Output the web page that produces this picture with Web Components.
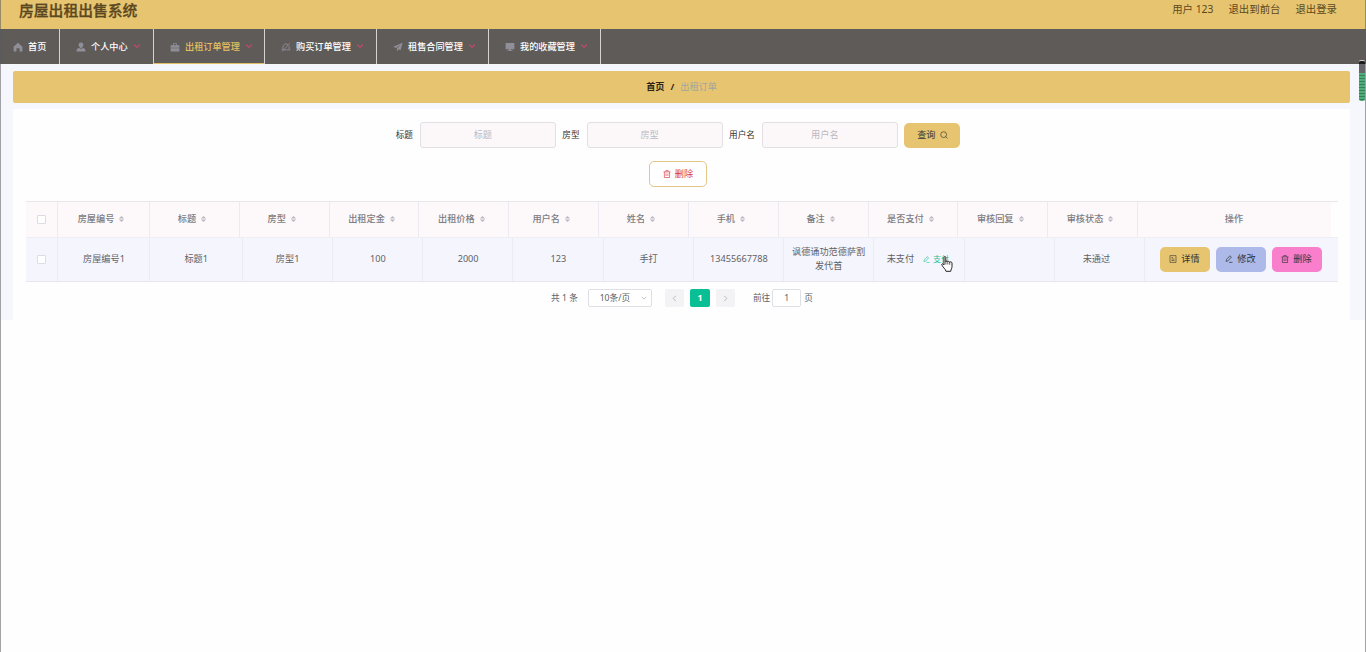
<!DOCTYPE html>
<html lang="zh-CN">
<head>
<meta charset="UTF-8">
<title>房屋出租出售系统</title>
<style>
  html, body {
    margin: 0;
    padding: 0;
  }
  body {
    width: 1366px;
    height: 652px;
    overflow: hidden;
    background: #fefefe;
    font-family: "Noto Sans", "Noto Sans CJK SC", sans-serif;
    font-size: 9.17px;
    line-height: 14px;
    color: #606266;
  }
</style>
</head>
<body>
<rent-app></rent-app>

<script>
const ICONS = {
  home: '<path fill="currentColor" d="M8 1 1 7.500V15h4.500v-5h5v5H15V7.500Z"/>',
  user: '<path fill="currentColor" d="M8 1a3.700 3.700 0 0 0-3.700 3.900C4.300 7.200 6 9.500 8 9.500s3.700-2.300 3.700-4.600A3.700 3.700 0 0 0 8 1ZM5 9.700c-2.300.6-4 1.600-4 3V15h14v-2.300c0-1.400-1.700-2.400-4-3a5 5 0 0 1-6 0Z"/>',
  box: '<path fill="currentColor" d="M5 2h6v3h4v4H1V5h4Zm1.300 1.300V5h3.400V3.300ZM1 10h14v5H1Z"/>',
  bell: '<path fill="none" stroke="currentColor" stroke-width="1.400" d="M3 12V8a5 5 0 0 1 8.500-3.500M13 6v6M1 12.500h14M2 15 14 2"/>',
  send: '<path fill="currentColor" d="M15.500 1 .5 7.500l4.200 2L12 4.500 6.200 10.200V15l2.500-3.300 3.300 1.600Z"/>',
  screen: '<path fill="currentColor" d="M1 1.500h14v10H9.500V13H12v1.500H4V13h2.500v-1.500H1Z"/>',
  down: '<path fill="none" stroke="currentColor" stroke-width="2.400" d="m2 5 6 6 6-6"/>',
  left: '<path fill="none" stroke="currentColor" stroke-width="2.200" d="M11 2 5 8l6 6"/>',
  right: '<path fill="none" stroke="currentColor" stroke-width="2.200" d="m5 2 6 6-6 6"/>',
  search: '<path fill="none" stroke="currentColor" stroke-width="1.300" d="M7.300 1.500a5.800 5.800 0 1 0 0 11.600 5.800 5.800 0 0 0 0-11.600ZM11.500 11.500 15 15"/>',
  trash: '<path fill="none" stroke="currentColor" stroke-width="1.300" d="M1 3.800h14M5.500 3.500V1.200h5v2.300M2.800 4v11h10.400V4M6.200 7v5M9.800 7v5"/>',
  edit: '<path fill="none" stroke="currentColor" stroke-width="1.400" d="m3 9 6.800-7.500 3 2.700L6 11.800l-4 1Zm5 5.700h7"/>',
  doc: '<path fill="none" stroke="currentColor" stroke-width="1.200" d="M2 1.200h12v13.600H2ZM5 5h3M5 8h6M5 11h6"/>',
  sort: '<path fill="currentColor" d="M8 1l6 6H2ZM8 15l6-6H2Z"/>'
};

class UiIcon extends HTMLElement {
  constructor() {
    super();
    this.attachShadow({mode: 'open'});
  }
  connectedCallback() {
    this.shadowRoot.innerHTML = `
      <style>
        :host {
          display: inline-block;
          flex: none;
          width: 8px;
          height: 8px;
        }
        svg {
          display: block;
          width: 100%;
          height: 100%;
        }
      </style>
      <svg viewBox="0 0 16 16">${ICONS[this.getAttribute('name')]}</svg>
    `;
  }
}
customElements.define('ui-icon', UiIcon);

class SiteHeader extends HTMLElement {
  constructor() {
    super();
    this.attachShadow({mode: 'open'}).innerHTML = `
      <style>
        :host {
          display: flex;
          justify-content: space-between;
          height: 29px;
          box-sizing: border-box;
          padding: 0 29px 0 19px;
          background: #e7c570;
          color: #5b4821;
        }
        h1 {
          margin: 0;
          font-size: 14.800px;
          font-weight: 500;
          line-height: 20px;
          -webkit-text-stroke: .3px;
        }
        nav {
          display: flex;
          gap: 15px;
          font-size: 10.400px;
          line-height: 18px;
        }
      </style>
      <h1><slot></slot></h1>
      <nav><span>用户 123</span><span>退出到前台</span><span>退出登录</span></nav>
    `;
  }
}
customElements.define('site-header', SiteHeader);

class NavItem extends HTMLElement {
  constructor() {
    super();
    this.attachShadow({mode: 'open'});
  }
  connectedCallback() {
    const arrow = this.hasAttribute('plain') ? '' : '<ui-icon class="arrow" name="down"></ui-icon>';
    this.shadowRoot.innerHTML = `
      <style>
        :host {
          display: flex;
          align-items: center;
          box-sizing: border-box;
          width: 112px;
          padding: 0 0 0 16px;
          border-right: 1px solid #d5d3d1;
          color: #fff;
          font-weight: 500;
          white-space: nowrap;
        }
        :host([active]) {
          color: #e7bf62;
          box-shadow: inset 0 -1px #e0bc68;
        }
        .icon {
          width: 10px;
          height: 10px;
          margin: 1px 5px 0 0;
          color: #908f98;
        }
        .arrow {
          width: 8px;
          height: 8px;
          margin: -1px 0 0 5px;
          color: #c04a66;
        }
      </style>
      <ui-icon class="icon" name="${this.getAttribute('icon')}"></ui-icon>
      <slot></slot>
      ${arrow}
    `;
  }
}
customElements.define('nav-item', NavItem);

class NavBar extends HTMLElement {
  constructor() {
    super();
    this.attachShadow({mode: 'open'}).innerHTML = `
      <style>
        :host {
          display: flex;
          height: 35px;
          background: #5e5b59;
        }
      </style>
      <slot></slot>
    `;
  }
}
customElements.define('nav-bar', NavBar);

class CrumbBar extends HTMLElement {
  constructor() {
    super();
    this.attachShadow({mode: 'open'}).innerHTML = `
      <style>
        :host {
          display: flex;
          align-items: center;
          justify-content: center;
          gap: 6px;
          height: 32px;
          border-radius: 2px;
          background: #e7c570;
          color: #2d2517;
        }
        b {
          font-weight: 700;
        }
        span {
          color: #a3a4a0;
        }
      </style>
      <b>首页</b><b>/</b><span><slot></slot></span>
    `;
  }
}
customElements.define('crumb-bar', CrumbBar);

class SearchField extends HTMLElement {
  constructor() {
    super();
    this.attachShadow({mode: 'open'});
  }
  connectedCallback() {
    const label = this.getAttribute('label');
    this.shadowRoot.innerHTML = `
      <style>
        :host {
          display: flex;
          align-items: center;
          gap: 7px;
          font-size: 8.600px;
          color: #333;
        }
        .box {
          box-sizing: border-box;
          width: 136px;
          height: 26px;
          padding-right: 10px;
          border: 1px solid #e2dfe5;
          border-radius: 3px;
          background: #fcf8fa;
          color: #bbb9bf;
          font-size: 9.170px;
          line-height: 23px;
          text-align: center;
        }
      </style>
      <span>${label}</span>
      <div class="box">${label}</div>
    `;
  }
}
customElements.define('search-field', SearchField);

class UiButton extends HTMLElement {
  constructor() {
    super();
    this.attachShadow({mode: 'open'}).innerHTML = `
      <style>
        :host {
          display: inline-flex;
          align-items: center;
          justify-content: center;
          gap: 4px;
          box-sizing: border-box;
          width: 50px;
          height: 25px;
          padding-bottom: 1px;
          border-radius: 5px;
          background: #e7c570;
          color: #333;
        }
        :host([kind="edit"]) {
          background: #adb9e8;
        }
        :host([kind="delete"]) {
          background: #f97ecb;
        }
        :host([kind="search"]) {
          width: 56px;
        }
        :host([kind="outline"]) {
          width: 58px;
          height: 26px;
          border: 1px solid #e3c88a;
          background: #fff;
          color: #d9363e;
        }
      </style>
      <slot></slot>
    `;
  }
}
customElements.define('ui-button', UiButton);

class OrderTable extends HTMLElement {
  constructor() {
    super();
    this.attachShadow({mode: 'open'});
  }
  connectedCallback() {
    const heads = ['房屋编号', '标题', '房型', '出租定金', '出租价格', '用户名', '姓名', '手机', '备注', '是否支付', '审核回复', '审核状态'];
    const cells = ['房屋编号1', '标题1', '房型1', '100', '2000', '123', '手打', '13455667788', '讽德诵功范德萨割发代首'];
    this.shadowRoot.innerHTML = `
      <style>
        :host {
          display: block;
          width: 1312px;
          border-top: 1px solid #e9e6ec;
        }
        .row {
          display: grid;
          box-sizing: border-box;
        }
        .row > div {
          display: flex;
          align-items: center;
          justify-content: center;
          box-sizing: border-box;
          border-right: 1px solid #edebf2;
        }
        .head {
          width: 1305px;
          height: 35px;
          grid-template-columns: 32px 92px repeat(11, 89.820px) 1fr;
          background: #fdf8f9;
          color: #7c7c82;
          font-weight: 500;
        }
        .head > div {
          gap: 4px;
          padding: 0 4px 2px 0;
        }
        .head > div:last-child {
          padding-right: 1px;
        }
        .head ui-icon {
          width: 7px;
          height: 8px;
          color: #b9bac2;
        }
        .body {
          height: 45px;
          grid-template-columns: 32px 92px 92.500px repeat(10, 90.250px) 1fr;
          border-top: 1px solid #f0eef5;
          border-bottom: 1px solid #e8e7ef;
          background: #f5f5fd;
        }
        .body > div {
          padding: 0 0 1px 1px;
        }
        .row > div:first-child {
          padding: 0 1px 0 0;
        }
        .row > div:last-child {
          border-right: 0;
        }
        .body .note {
          padding: 0 7px 1px;
          text-align: center;
        }
        .check {
          box-sizing: border-box;
          width: 9px;
          height: 9px;
          border: 1px solid #dcdde4;
          border-radius: 1px;
          background: #fff;
        }
        .body .state {
          padding-right: 3px;
        }
        .pay {
          display: flex;
          align-items: center;
          gap: 3px;
          margin: 0 3px 0 9px;
          color: #1dbf97;
          font-size: 8px;
        }
        .pay ui-icon {
          width: 7px;
          height: 7px;
        }
        .body .actions {
          gap: 6px;
          padding: 0 2px 0 0;
        }
      </style>
      <div class="row head">
        <div><span class="check"></span></div>
        ${heads.map(h => `<div>${h}<ui-icon name="sort"></ui-icon></div>`).join('')}
        <div>操作</div>
      </div>
      <div class="row body">
        <div><span class="check"></span></div>
        ${cells.map((c, i) => `<div class="${i === 8 ? 'note' : ''}">${c}</div>`).join('')}
        <div>未支付<span class="pay"><ui-icon name="edit"></ui-icon>支付</span></div>
        <div></div>
        <div style="padding-right: 7px">未通过</div>
        <div class="actions">
          <ui-button><ui-icon name="doc"></ui-icon>详情</ui-button>
          <ui-button kind="edit"><ui-icon name="edit"></ui-icon>修改</ui-button>
          <ui-button kind="delete"><ui-icon name="trash"></ui-icon>删除</ui-button>
        </div>
      </div>
    `;
  }
}
customElements.define('order-table', OrderTable);

class TablePager extends HTMLElement {
  constructor() {
    super();
    this.attachShadow({mode: 'open'}).innerHTML = `
      <style>
        :host {
          display: flex;
          align-items: center;
          justify-content: center;
          height: 18px;
          padding-left: 1px;
          font-size: 8.670px;
        }
        .size, .page, .jump {
          display: flex;
          align-items: center;
          justify-content: center;
          box-sizing: border-box;
          height: 18px;
          border-radius: 2px;
        }
        .size {
          width: 64px;
          margin: 0 13px 0 10px;
          padding-left: 7px;
          gap: 11px;
          border: 1px solid #dfe0e6;
          background: #fff;
        }
        .size ui-icon {
          width: 6px;
          height: 6px;
          color: #b9bcc4;
        }
        .page {
          width: 19px;
          margin-right: 6px;
          background: #f3f3f5;
          color: #b5b7bd;
        }
        .page ui-icon {
          width: 7px;
          height: 7px;
        }
        .page.on {
          width: 20px;
          background: #0abf93;
          color: #fff;
          font-weight: 700;
        }
        .jump {
          width: 29px;
          margin: 0 3px 0 2px;
          border: 1px solid #dfe0e6;
          background: #fff;
        }
        .goto {
          margin-left: 12px;
        }
      </style>
      <span>共 1 条</span>
      <div class="size">10条/页<ui-icon name="down"></ui-icon></div>
      <div class="page"><ui-icon name="left"></ui-icon></div>
      <div class="page on">1</div>
      <div class="page"><ui-icon name="right"></ui-icon></div>
      <span class="goto">前往</span>
      <div class="jump">1</div>
      <span>页</span>
    `;
  }
}
customElements.define('table-pager', TablePager);

// hand pointer, floats over the pay link
class HandPointer extends HTMLElement {
  constructor() {
    super();
    this.attachShadow({mode: 'open'}).innerHTML = `
      <style>
        :host {
          position: absolute;
          left: 941px;
          top: 256px;
          width: 12px;
          height: 16px;
        }
        svg {
          display: block;
        }
      </style>
      <svg width="12" height="16" viewBox="0 0 12 16">
        <path fill="#fff" stroke="#222" stroke-width="1" stroke-linejoin="round" d="M3 9V1.500c0-1.300 1.800-1.300 1.800 0V6c0-1.200 1.900-1.200 1.900.2 0-1.200 1.900-1.200 1.900.3 0-1 2.400-1 2.400.7v3.500c0 1.600-1 2.500-1.300 4.600H5C4.500 13 2 11.500.8 8.800c-.3-1 .9-1.400 1.500-.6Z"/>
        <path fill="none" stroke="#222" stroke-width=".7" d="M4.900 6v2.500M6.800 6.500v2M8.700 6.800v2"/>
      </svg>
    `;
  }
}
customElements.define('hand-pointer', HandPointer);

// small level meter stuck to the right edge of the window
class EdgeMeter extends HTMLElement {
  constructor() {
    super();
    this.attachShadow({mode: 'open'}).innerHTML = `
      <style>
        :host {
          position: absolute;
          left: 1359px;
          top: 60px;
          box-sizing: border-box;
          width: 6px;
          height: 41px;
          border-top: 1px solid #d8d8d8;
          border-radius: 2px;
          background:
            linear-gradient(#1c1c1c 0 3px, #66666a 3px 12px, transparent 12px),
            repeating-linear-gradient(#4fae78 0 2px, #35805a 2px 3px);
        }
      </style>
    `;
  }
}
customElements.define('edge-meter', EdgeMeter);

class RentApp extends HTMLElement {
  constructor() {
    super();
    this.attachShadow({mode: 'open'}).innerHTML = `
      <style>
        :host {
          display: block;
          position: relative;
          box-sizing: border-box;
          width: 1366px;
          height: 652px;
        }
        /* window frame */
        :host::before {
          content: "";
          position: absolute;
          inset: 0;
          border-left: 1px solid rgba(90, 90, 95, .55);
          border-right: 1px solid rgba(90, 90, 95, .55);
          pointer-events: none;
        }
        .page {
          box-sizing: border-box;
          height: 256px;
          padding: 7px 16px 0 13px;
          background: #f6f6fd;
        }
        .panel {
          box-sizing: border-box;
          height: 211px;
          margin-top: 6px;
          padding: 13px 13px 0;
          background: #fefefe;
        }
        .search {
          display: flex;
          justify-content: center;
          align-items: center;
          gap: 6.500px;
          height: 26px;
          padding-right: 7px;
        }
        .tools {
          display: flex;
          justify-content: center;
          height: 26px;
          margin: 13px 0 14px;
          padding-right: 7px;
        }
        table-pager {
          margin-top: 7px;
        }
      </style>
      <site-header>房屋出租出售系统</site-header>
      <nav-bar>
        <nav-item plain icon="home" style="width: 60px; padding-left: 13px">首页</nav-item>
        <nav-item icon="user" style="width: 94px">个人中心</nav-item>
        <nav-item active icon="box" style="width: 111px">出租订单管理</nav-item>
        <nav-item icon="bell">购买订单管理</nav-item>
        <nav-item icon="send">租售合同管理</nav-item>
        <nav-item icon="screen">我的收藏管理</nav-item>
      </nav-bar>
      <div class="page">
        <crumb-bar>出租订单</crumb-bar>
        <div class="panel">
          <div class="search">
            <search-field label="标题"></search-field>
            <search-field label="房型"></search-field>
            <search-field label="用户名"></search-field>
            <ui-button kind="search">查询<ui-icon name="search"></ui-icon></ui-button>
          </div>
          <div class="tools">
            <ui-button kind="outline"><ui-icon name="trash"></ui-icon>删除</ui-button>
          </div>
          <order-table></order-table>
          <table-pager></table-pager>
        </div>
      </div>
      <hand-pointer></hand-pointer>
      <edge-meter></edge-meter>
    `;
  }
}
customElements.define('rent-app', RentApp);
</script>
</body>
</html>
